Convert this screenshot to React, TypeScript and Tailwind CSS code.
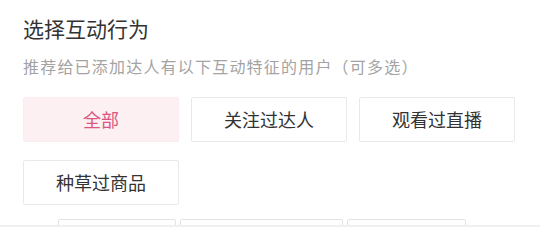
import React from "react";

const options = ["全部", "关注过达人", "观看过直播", "种草过商品"];

export default function App() {
  const selected = "全部";

  return (
    <div
      className="w-[540px] h-[227px] overflow-hidden bg-white relative"
      style={{ fontFamily: '"Noto Sans CJK SC", "Noto Sans", sans-serif' }}
    >
      <div className="px-[23px] pt-[14px]">
        {/* 标题 */}
        <h2 className="text-[21px] leading-[29px] text-[#333333] font-normal">选择互动行为</h2>
        <p className="mt-[12px] text-[16px] leading-[22px] text-[#a3a3a3] tracking-[1.2px]">
          推荐给已添加达人有以下互动特征的用户（可多选）
        </p>

        {/* 选项 */}
        <div className="mt-[20px] grid grid-cols-[156px_156px_156px] gap-x-[12px] gap-y-[18px]">
          {options.map((opt) => {
            const active = opt === selected;
            return (
              <div
                key={opt}
                className={
                  active
                    ? "h-[45px] flex items-center justify-center rounded-[2px] border border-[#fcecf0] bg-[#fdf0f3] text-[18px] text-[#d9577f]"
                    : "h-[45px] flex items-center justify-center rounded-[2px] border border-[#e9e9e9] bg-white text-[18px] text-[#333333]"
                }
              >
                {opt}
              </div>
            );
          })}
        </div>
      </div>

      {/* 底部被截断的下一块 */}
      <div className="mt-[14px] ml-[58px] flex gap-[4px]">
        <div className="w-[118px] h-[10px] border border-[#e3e3e3] rounded-[2px]" />
        <div className="w-[163px] h-[10px] border border-[#e3e3e3] rounded-[2px]" />
        <div className="w-[119px] h-[10px] border border-[#e3e3e3] rounded-[2px]" />
      </div>
      <div className="absolute left-0 right-0 bottom-0 h-[2px] bg-[#f0f0f0]" />
    </div>
  );
}
